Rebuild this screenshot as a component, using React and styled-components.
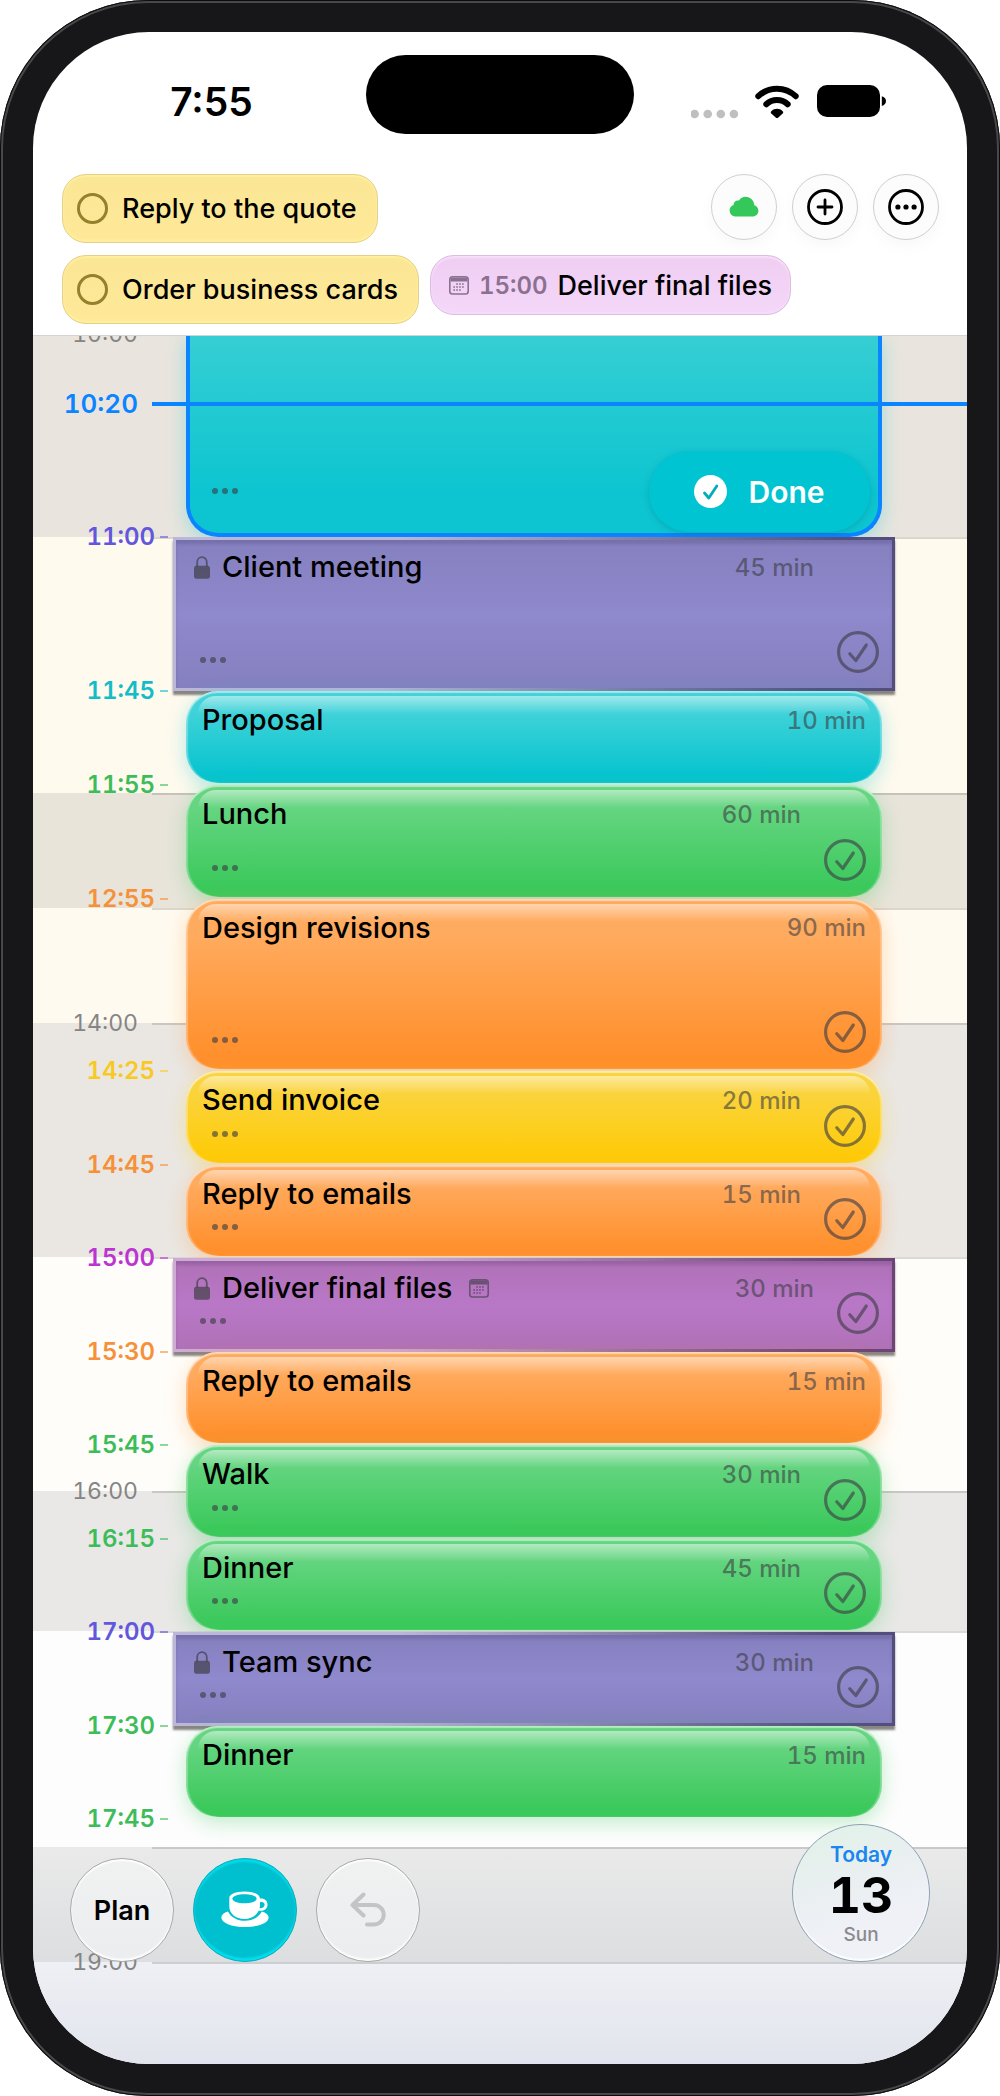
import React, { useState } from 'react';
import styled, { createGlobalStyle, css } from 'styled-components';

const GlobalStyle = createGlobalStyle`
  * {
    box-sizing: border-box;
  }

  body {
    margin: 0;
    background: #fff;
    color: #000;
    font-family: Inter, "Liberation Sans", sans-serif;
    font-variant-numeric: tabular-nums;
  }

  button {
    padding: 0;
    border: 0;
    background: none;
    color: inherit;
    font: inherit;
    font-variant-numeric: inherit;
    cursor: pointer;
  }
`;

const ink = 'rgba(60, 60, 67, 0.62)';

const palette = {
  cyan: { label: '#14bcc8', from: '#42d3d9', to: '#08c4cf', glow: 'rgba(0, 196, 210, 0.3)' },
  green: { label: '#3dbd5a', from: '#65d581', to: '#3cc95c', glow: 'rgba(52, 199, 89, 0.3)' },
  orange: { label: '#f5913a', from: '#ffab5f', to: '#ff902d', glow: 'rgba(255, 149, 50, 0.3)' },
  yellow: { label: '#f8c924', from: '#fad43f', to: '#fecb0a', glow: 'rgba(255, 204, 0, 0.3)' },
  indigo: { label: '#6257dc', from: '#8580bf', mid: '#8f89cd', edge: '#bbb7da', dark: '#544e7e' },
  purple: { label: '#bb35cf', from: '#af71b7', mid: '#b978c7', edge: '#cfaad4', dark: '#6d4476' }
};

const bands = [
  { height: 203, color: '#e9e5de', label: '10:00' },
  { height: 256, color: '#fffaee' },
  { height: 115, color: '#e8e4da' },
  { height: 115, color: '#fffaf0' },
  { height: 234, color: '#eae7e3', label: '14:00' },
  { height: 234, color: '#fffdf9' },
  { height: 140, color: '#e9e8e6', label: '16:00' },
  { height: 216, color: '#fdfdfd' },
  { height: 115, color: 'linear-gradient(#eaeaea, #dcdee0)' },
  { height: 102, color: 'linear-gradient(#eff0f5, #e2e4ed)', label: '19:00' }
];

const events = [
  { height: 154, time: '11:00', title: 'Client meeting', length: '45 min', color: 'indigo', fixed: true, open: true },
  { height: 94, time: '11:45', title: 'Proposal', length: '10 min', color: 'cyan' },
  { height: 114, time: '11:55', title: 'Lunch', length: '60 min', color: 'green', open: true },
  { height: 172, time: '12:55', title: 'Design revisions', length: '90 min', color: 'orange', open: true, wide: true },
  { height: 94, time: '14:25', title: 'Send invoice', length: '20 min', color: 'yellow', open: true },
  { height: 93, time: '14:45', title: 'Reply to emails', length: '15 min', color: 'orange', open: true },
  { height: 94, time: '15:00', title: 'Deliver final files', length: '30 min', color: 'purple', fixed: true, open: true, calendar: true },
  { height: 93, time: '15:30', title: 'Reply to emails', length: '15 min', color: 'orange' },
  { height: 94, time: '15:45', title: 'Walk', length: '30 min', color: 'green', open: true },
  { height: 93, time: '16:15', title: 'Dinner', length: '45 min', color: 'green', open: true },
  { height: 94, time: '17:00', title: 'Team sync', length: '30 min', color: 'indigo', fixed: true, open: true },
  { height: 93, time: '17:30', title: 'Dinner', length: '15 min', color: 'green' }
];

const Phone = styled.div`
  padding: 32px 33px;
  border-radius: 148px;
  background: #17171a;
  box-shadow: inset 0 0 0 1px #0c0c0d, inset 0 0 0 3px #48484b;
`;

const Screen = styled.main`
  position: relative;
  overflow: hidden;
  border-radius: 116px;
  background: #fff;
`;

const StatusBar = styled.div`
  display: grid;
  grid-template-columns: 1fr 268px 1fr;
  align-items: center;
  padding: 23px 24px 0;
`;

const Clock = styled.time`
  padding-top: 14px;
  font-size: 39px;
  font-weight: 600;
  font-variant-numeric: normal;
  line-height: 48px;
  text-align: center;
`;

const Island = styled.div`
  height: 79px;
  border-radius: 40px;
  background: #000;
`;

const StatusIcons = styled.div`
  display: flex;
  justify-content: center;
  padding-top: 14px;
`;

const Tray = styled.header`
  display: flex;
  flex-direction: column;
  gap: 12px;
  padding: 40px 28px 11px 29px;
  border-bottom: 1px solid #d5d4d2;
`;

const TrayRow = styled.div`
  display: flex;
  align-items: flex-start;
  gap: 11px;
`;

const TrayActions = styled.div`
  display: flex;
  gap: 15px;
  margin-left: auto;
`;

const chipShape = css`
  display: flex;
  align-items: center;
  border-radius: 24px;
  font-weight: 500;
  white-space: nowrap;
`;

const TodoChip = styled.label`
  ${chipShape}
  gap: 14px;
  height: 69px;
  padding: 0 20px 0 14px;
  border: 1px solid #e3d08a;
  background: linear-gradient(#fae694, #ffe999);
  box-shadow: inset 0 2px 2px #fff0a0, inset 0 -2px 2px #fff09c;
  font-size: 27px;
`;

const TodoBox = styled.input`
  appearance: none;
  width: 31px;
  height: 31px;
  margin: 0;
  border: 3px solid #95802c;
  border-radius: 50%;

  &:checked {
    background: #95802c;
  }
`;

const EventChip = styled.button`
  ${chipShape}
  gap: 10px;
  height: 60px;
  padding: 0 18px;
  border: 1px solid #dcbde0;
  background: linear-gradient(#efcdf2, #f4d7f9);
  box-shadow: inset 0 2px 2px #f8e0fb, inset 0 -2px 2px #f6dcfb;
  font-size: 27px;
`;

const ChipTime = styled.span`
  color: #8b7190;
  font-size: 24px;
  font-weight: 600;
`;

const RoundButton = styled.button`
  display: flex;
  align-items: center;
  justify-content: center;
  width: 66px;
  height: 66px;
  border: 1px solid #cfcfcf;
  border-radius: 50%;
  background: #fcfcfc;
  box-shadow: 0 6px 16px rgba(0, 0, 0, 0.03);
`;

const Timeline = styled.section`
  position: relative;
  display: grid;
  overflow: hidden;
`;

const Layer = styled.div`
  grid-area: 1 / 1;
  margin-top: -2px;
`;

const Band = styled.div`
  display: grid;
  grid-template-columns: 105px 1fr;
  gap: 14px;
  height: ${props => props.$height}px;
  background: ${props => props.$color};
`;

const BandLabel = styled.span`
  height: 28px;
  margin-top: -14px;
  color: #858585;
  font-size: 23px;
  line-height: 28px;
  text-align: right;
`;

const BandLine = styled.div`
  height: 2px;
  background: rgba(0, 0, 0, 0.14);
`;

const Row = styled.article`
  display: grid;
  grid-template-columns: 140px 1fr 72px;
  height: ${props => props.$height}px;
`;

const StartTime = styled.time`
  display: flex;
  align-items: center;
  justify-content: flex-end;
  gap: 5px;
  height: 28px;
  margin-top: -14px;
  padding-right: 5px;
  color: ${props => props.$color};
  font-size: 24px;
  font-weight: 600;
  line-height: 28px;

  &::after {
    content: "";
    width: 8px;
    height: 2px;
    background: currentColor;
    opacity: 0.6;
  }
`;

const softBlock = css`
  margin: 0 13px 2px;
  border-radius: 32px;
  background: linear-gradient(${props => props.$tone.from} 20%, ${props => props.$tone.to} 90%);
  box-shadow:
    inset 0 2px 1px rgba(255, 255, 255, 0.5),
    inset 2px 0 1px rgba(255, 255, 255, 0.3),
    inset -2px 0 1px rgba(255, 255, 255, 0.3),
    0 6px 20px ${props => props.$tone.glow};

  &::before {
    content: "";
    position: absolute;
    inset: 5px 12px auto;
    height: 18px;
    border-radius: 20px 20px 0 0;
    background: linear-gradient(rgba(255, 255, 255, 0.5), rgba(255, 255, 255, 0));
  }
`;

const fixedBlock = css`
  border: 3px solid;
  border-image: linear-gradient(100deg, ${props => props.$tone.edge} 30%, ${props => props.$tone.dark} 90%) 1;
  background: linear-gradient(${props => props.$tone.from}, ${props => props.$tone.mid}, ${props => props.$tone.from});
  box-shadow: 0 4px 2px rgba(60, 55, 50, 0.6), inset 0 4px 3px rgba(50, 40, 80, 0.18);
`;

const Block = styled.div`
  position: relative;
  display: flex;
  gap: 23px;
  ${props => (props.$fixed ? fixedBlock : softBlock)}
  padding: ${props => (props.$fixed ? '9px 13px 15px 14px' : '11px 16px 16px')};
`;

const BlockMain = styled.div`
  position: relative;
  display: flex;
  flex: 1;
  flex-direction: column;
  justify-content: space-between;
  padding-bottom: 3px;
`;

const BlockHead = styled.div`
  display: flex;
  align-items: center;
  gap: 12px;
  height: 36px;
  padding-left: ${props => (props.$fixed ? 4 : 0)}px;
`;

const Title = styled.h2`
  margin: 0;
  padding-right: 4px;
  font-size: 29px;
  font-weight: 500;
  line-height: 36px;
  white-space: nowrap;
`;

const Length = styled.span`
  margin-left: auto;
  color: ${ink};
  font-size: 24px;
  font-weight: 500;
`;

const MoreButton = styled.button`
  display: flex;
  gap: 4px;
  align-self: flex-start;
  padding: 7px 10px;

  span {
    width: 6px;
    height: 6px;
    border-radius: 50%;
    background: ${ink};
  }
`;

const CheckButton = styled.button`
  height: 42px;
  color: ${ink};

  &[aria-pressed="true"] {
    color: #000;
  }
`;

/* Tall blocks have room for the length above the check. */
const Side = styled.div`
  position: relative;
  display: flex;
  flex-direction: column;
  align-items: flex-end;
  justify-content: flex-end;

  ${Length} {
    margin-bottom: auto;
    line-height: 36px;
  }
`;

const CurrentBlock = styled.div`
  display: flex;
  align-items: flex-end;
  justify-content: space-between;
  margin: 0 13px;
  padding: 0 8px 1px 12px;
  border: 4px solid #0a84ff;
  border-top: 0;
  border-radius: 0 0 32px 32px;
  background: linear-gradient(#36ced4, #0cc5d0 80%);
  box-shadow: 0 6px 20px rgba(0, 196, 210, 0.3);
`;

const CurrentMore = styled.div`
  display: flex;
  flex-direction: column;
  justify-content: center;
  height: 82px;
`;

const DoneButton = styled.button`
  display: flex;
  align-items: center;
  justify-content: center;
  gap: 21px;
  width: 221px;
  height: 81px;
  border-radius: 40px;
  background: #00c4d2;
  box-shadow: 0 2px 6px rgba(0, 90, 110, 0.25);
  color: #fff;
  font-size: 30px;
  font-weight: 600;
`;

/* Sits over the running block at the current minute. */
const NowMarker = styled.div`
  position: absolute;
  inset: 52px 0 auto;
  display: grid;
  grid-template-columns: 105px 1fr;
  align-items: center;
  gap: 14px;
  color: #0a84ff;
  font-size: 26px;
  font-weight: 600;
  line-height: 32px;
  text-align: right;

  &::after {
    content: "";
    height: 4px;
    background: currentColor;
  }
`;

const Dock = styled.nav`
  position: absolute;
  inset: auto 37px 102px;
  display: flex;
  align-items: flex-end;
  gap: 19px;
`;

const DockButton = styled(RoundButton)`
  width: 104px;
  height: 104px;
  border-color: ${props => (props.$active ? '#12adbb' : '#a9a9ab')};
  background: ${props => (props.$active ? '#00bfce' : 'linear-gradient(#f0f1f1, #ecedef)')};
  box-shadow: ${props =>
    props.$active
      ? 'inset 0 3px 2px #00dcea, inset 0 -3px 2px #00e0f0'
      : 'inset 0 2px 2px #fff, inset 0 -2px 2px #fff'};
  color: ${props => (props.$active ? '#fff' : '#000')};
  font-size: 27px;
  font-weight: 600;
`;

const DateButton = styled.button`
  display: flex;
  flex-direction: column;
  align-items: center;
  justify-content: center;
  width: 138px;
  height: 138px;
  margin-left: auto;
  padding-top: 4px;
  border: 1px solid #8da0b4;
  border-radius: 50%;
  background: linear-gradient(160deg, #dff3e7, #eaeff1 40%, #eff1f7 70%);
  box-shadow: inset 0 -2px 2px #fff;
`;

const DateTop = styled.span`
  color: #1a86f0;
  font-size: 21px;
  font-weight: 600;
  line-height: 24px;
`;

const DateDay = styled.strong`
  font-size: 50px;
  font-weight: 700;
  line-height: 56px;
`;

const DateWeekday = styled.span`
  color: #8a8a8e;
  font-size: 19px;
  font-weight: 500;
  line-height: 24px;
`;

const CheckIcon = () => (
  <svg width="42" height="42" viewBox="0 0 42 42" fill="none" stroke="currentColor" strokeWidth="3.2" strokeLinecap="round" strokeLinejoin="round">
    <circle cx="21" cy="21" r="19.4" />
    <path d="M12.8 22.8 18.8 29.5 29.3 14" />
  </svg>
);

const LockIcon = () => (
  <svg width="16" height="23" viewBox="0 0 16 23" color="rgba(60, 60, 67, 0.68)">
    <path d="M3.2 10.5V6.2a4.8 5 0 0 1 9.6 0v4.3" fill="none" stroke="currentColor" strokeWidth="1.8" />
    <rect x="0" y="9.8" width="16" height="13" rx="2.4" fill="currentColor" />
  </svg>
);

const CalendarIcon = ({ color }) => (
  <svg width="20" height="19" viewBox="0 0 20 19" fill="none" color={color}>
    <rect x="0.8" y="0.8" width="18.4" height="17.2" rx="2.8" stroke="currentColor" strokeWidth="1.6" />
    <path d="M1.6 5.4V3.4a1.8 1.8 0 0 1 1.8-1.8h13.2a1.8 1.8 0 0 1 1.8 1.8v2Z" fill="currentColor" />
    <path d="M7.2 8h8.5M4.3 11h11.4M4.3 14h8.5" stroke="currentColor" strokeWidth="1.6" strokeDasharray="1.7 1.2" />
  </svg>
);

const Dots = () => (
  <>
    <span />
    <span />
    <span />
  </>
);

const StatusGlyphs = () => (
  <svg width="196" height="36" viewBox="691 84 196 36">
    <g fill="#bfbfbf">
      <circle cx="694.6" cy="114" r="4.3" />
      <circle cx="707.7" cy="114" r="4.3" />
      <circle cx="720.8" cy="114" r="4.3" />
      <circle cx="733.9" cy="114" r="4.3" />
    </g>
    <g fill="none" stroke="#000" strokeWidth="6" strokeLinecap="round">
      <path d="M758.3 96.2a27 27 0 0 1 37.4 0" />
      <path d="M766.3 104.3a15.6 15.6 0 0 1 21.4 0" />
    </g>
    <path d="M771.3 111.2c3.5-3.2 8-3.2 11.4 0 .8.8.6 1.6 0 2.3l-4.4 4c-.8.7-1.8.7-2.6 0l-4.4-4c-.6-.7-.8-1.5 0-2.3Z" />
    <rect x="817" y="85" width="63" height="32" rx="10" />
    <path d="M881.8 96.2c2.6.6 4.2 2.6 4.2 4.9s-1.6 4.3-4.2 4.9Z" />
  </svg>
);

const CloudIcon = () => (
  <svg width="30" height="22" viewBox="0 0 30 22">
    <path fill="#34c759" d="M6.2 20.5A6 6 0 0 1 .6 14.6c0-2.7 1.6-4.7 4-5.5-.1-3 2.6-5.2 5.4-4.5C11.3 2.2 13.7.8 16.6.8c4.8 0 8.4 3.6 8.7 8.4 2.5.7 4.1 2.9 4.1 5.5 0 3.3-2.5 5.8-6 5.8Z" />
  </svg>
);

const PlusIcon = () => (
  <svg width="36" height="36" viewBox="0 0 36 36" fill="none" stroke="#000" strokeWidth="2.8" strokeLinecap="round">
    <circle cx="18" cy="18" r="16.5" />
    <path d="M18 11v14M11 18h14" />
  </svg>
);

const MenuIcon = () => (
  <svg width="36" height="36" viewBox="0 0 36 36">
    <circle cx="18" cy="18" r="16.5" fill="none" stroke="#000" strokeWidth="2.8" />
    <circle cx="9.9" cy="18" r="2.6" />
    <circle cx="18" cy="18" r="2.6" />
    <circle cx="26.1" cy="18" r="2.6" />
  </svg>
);

const DoneIcon = () => (
  <svg width="33" height="33" viewBox="0 0 33 33">
    <circle cx="16.5" cy="16.5" r="16.5" fill="#fff" />
    <path d="M10.5 18 14.8 23 22.8 11" fill="none" stroke="#00aebb" strokeWidth="2.8" strokeLinecap="round" strokeLinejoin="round" />
  </svg>
);

const CupIcon = () => (
  <svg width="48" height="38" viewBox="0 0 48 38" fill="#fff">
    <path d="M7 20.5C2.7 21.6.4 23.8.4 26.4.4 31.7 10 36 24 36s23.6-4.3 23.6-9.6c0-2.6-2.6-4.8-6.8-5.9-3 5.8-9.2 9.3-16.8 9.3S9.8 26.3 7 20.5Z" />
    <path fillRule="evenodd" d="M8.3 6.8C8.3 3.2 14.8.4 23.5.4c7.4 0 13.1 2 14.7 4.8.6 1 .7 2 .7 2.4 4.4-.6 7.6 2 7.6 5.8 0 4.3-3.6 6.9-8.8 6.3-2.6 5.3-8 8.3-14.2 8.3C14.7 28 8.3 22.8 8.3 15.3ZM23.5 3.2c-6.9 0-12.1 2-12.1 4.5s5.2 4.5 12.1 4.5 12.1-2 12.1-4.5-5.2-4.5-12.1-4.5ZM39 11.2v2.6c0 1.2-.1 2.3-.4 3.4 3 .3 5-1.2 5-3.6 0-2.2-2-3.2-4.6-2.4Z" />
  </svg>
);

const UndoIcon = () => (
  <svg width="36" height="36" viewBox="0 0 36 36" fill="none" stroke="#c3c4c6" strokeWidth="4" strokeLinecap="round" strokeLinejoin="round">
    <path d="M13.5 2.5 2.5 13 13.5 23.5M3.5 13H24a9.7 9.7 0 0 1 0 19.4H17" />
  </svg>
);

const CalendarEvent = ({ event }) => {
  const [done, setDone] = useState(false);
  const tone = palette[event.color];

  return (
    <Row $height={event.height}>
      <StartTime $color={tone.label}>{event.time}</StartTime>
      <Block $tone={tone} $fixed={event.fixed}>
        <BlockMain>
          <BlockHead $fixed={event.fixed}>
            {event.fixed && <LockIcon />}
            <Title>{event.title}</Title>
            {event.calendar && <CalendarIcon color={ink} />}
            {!event.wide && <Length>{event.length}</Length>}
          </BlockHead>
          {event.open && (
            <MoreButton aria-label={`More about ${event.title}`}>
              <Dots />
            </MoreButton>
          )}
        </BlockMain>
        {event.open && (
          <Side>
            {event.wide && <Length>{event.length}</Length>}
            <CheckButton aria-label={`Complete ${event.title}`} aria-pressed={done} onClick={() => setDone(!done)}>
              <CheckIcon />
            </CheckButton>
          </Side>
        )}
      </Block>
    </Row>
  );
};

const App = () => (
  <>
    <GlobalStyle />
    <Phone>
      <Screen>
        <StatusBar>
          <Clock>7:55</Clock>
          <Island />
          <StatusIcons>
            <StatusGlyphs />
          </StatusIcons>
        </StatusBar>

        <Tray>
          <TrayRow>
            <TodoChip>
              <TodoBox type="checkbox" />
              Reply to the quote
            </TodoChip>
            <TrayActions>
              <RoundButton aria-label="Sync"><CloudIcon /></RoundButton>
              <RoundButton aria-label="Add"><PlusIcon /></RoundButton>
              <RoundButton aria-label="Menu"><MenuIcon /></RoundButton>
            </TrayActions>
          </TrayRow>
          <TrayRow>
            <TodoChip>
              <TodoBox type="checkbox" />
              Order business cards
            </TodoChip>
            <EventChip>
              <CalendarIcon color="#8b7190" />
              <ChipTime>15:00</ChipTime>
              Deliver final files
            </EventChip>
          </TrayRow>
        </Tray>

        <Timeline>
          <Layer>
            {bands.map((band, i) => (
              <Band key={i} $height={band.height} $color={band.color}>
                <BandLabel>{band.label}</BandLabel>
                <BandLine />
              </Band>
            ))}
          </Layer>
          <Layer>
            <Row $height={203}>
              <span />
              <CurrentBlock>
                <CurrentMore>
                  <MoreButton aria-label="More about the current task">
                    <Dots />
                  </MoreButton>
                </CurrentMore>
                <DoneButton>
                  <DoneIcon />
                  Done
                </DoneButton>
              </CurrentBlock>
            </Row>
            {events.map(event => (
              <CalendarEvent key={event.time} event={event} />
            ))}
            <Row $height={93}>
              <StartTime $color={palette.green.label}>17:45</StartTime>
            </Row>
          </Layer>
          <NowMarker>10:20</NowMarker>
        </Timeline>

        <Dock>
          <DockButton>Plan</DockButton>
          <DockButton $active aria-label="Take a break"><CupIcon /></DockButton>
          <DockButton aria-label="Undo"><UndoIcon /></DockButton>
          <DateButton>
            <DateTop>Today</DateTop>
            <DateDay>13</DateDay>
            <DateWeekday>Sun</DateWeekday>
          </DateButton>
        </Dock>
      </Screen>
    </Phone>
  </>
);

export default App;
